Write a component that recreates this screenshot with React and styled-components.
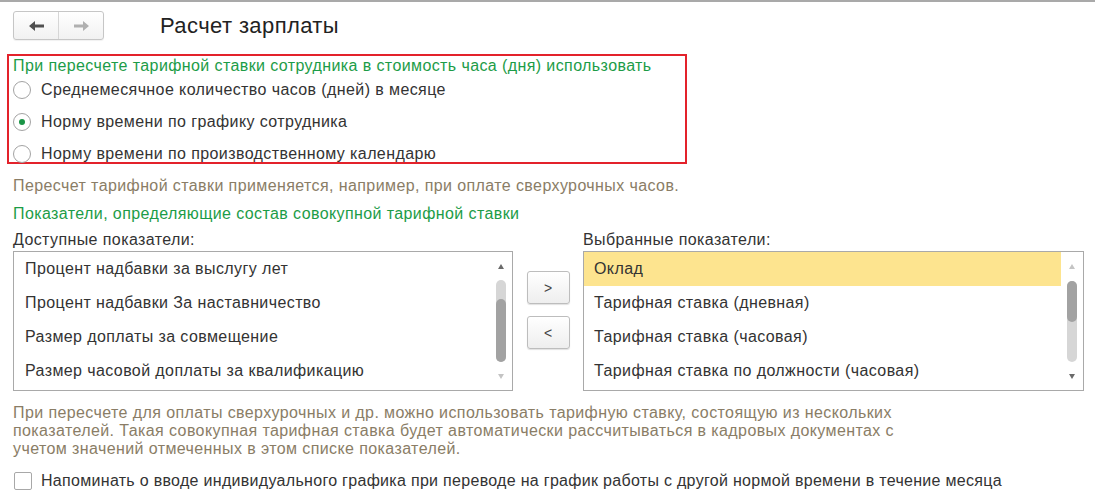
import React from "react";
import styled, { createGlobalStyle } from "styled-components";

const GlobalStyle = createGlobalStyle`
  html, body { margin: 0; padding: 0; background: #fff; }
  body {
    font-family: "Liberation Sans", Arial, sans-serif;
    color: #333;
  }
  * { box-sizing: border-box; }
`;

const Page = styled.div`
  width: 1095px;
  height: 503px;
  border-top: 2px solid #a9a9a9;
  overflow: hidden;
`;

const Header = styled.div`
  display: flex;
  align-items: center;
  padding: 9px 0 0 13px;
`;

const NavGroup = styled.div`
  display: flex;
  width: 91px;
  height: 29px;
  border: 1px solid #c6c6c6;
  border-radius: 3px;
  background: linear-gradient(#ffffff, #f1f1f1);
  box-shadow: 0 1px 1px rgba(0, 0, 0, 0.06);
`;

const NavButton = styled.div`
  flex: 1;
  display: flex;
  align-items: center;
  justify-content: center;
  & + & {
    border-left: 1px solid #d6d6d6;
  }
  svg { display: block; }
`;

const Title = styled.div`
  margin-left: 56px;
  font-size: 22px;
  letter-spacing: 0.4px;
  color: #222;
  line-height: 29px;
`;

const Content = styled.div`
  padding-left: 13px;
`;

const RedBox = styled.div`
  margin: 14px 0 0 -6px;
  width: 680px;
  height: 110px;
  border: 2px solid #e3222b;
  padding: 0 4px;
`;

const Text = styled.div`
  font-size: 16px;
  letter-spacing: ${(p) => p.$ls ?? 0.4}px;
  line-height: ${(p) => p.$lh || 18}px;
  margin-top: ${(p) => p.$mt || 0}px;
  white-space: nowrap;
`;

const GreenHeading = styled(Text)`
  color: #1c9c47;
`;

const Hint = styled(Text)`
  color: #8a7d66;
`;

const Label = styled(Text)`
  color: #333;
`;

const RadioList = styled.div`
  display: flex;
  flex-direction: column;
  gap: 10px;
  padding-top: 3px;
`;

const RadioRow = styled.div`
  display: flex;
  align-items: center;
  height: 22px;
  gap: 10px;
  font-size: 16px;
  letter-spacing: 0.4px;
  color: #333;
  white-space: nowrap;
`;

const RadioCircle = styled.span`
  flex: none;
  width: 18px;
  height: 18px;
  border-radius: 50%;
  border: 1px solid #a3a3a3;
  background: #fff;
  display: flex;
  align-items: center;
  justify-content: center;
  &::after {
    content: "";
    width: 6px;
    height: 6px;
    border-radius: 50%;
    background: ${(p) => (p.$checked ? "#1a9446" : "transparent")};
  }
`;

const ListsGrid = styled.div`
  display: grid;
  grid-template-columns: 500px 70px 501px;
  margin-top: ${(p) => p.$mt || 0}px;
`;

const ListBox = styled.div`
  height: 140px;
  border: 1px solid #a9a9a9;
  display: flex;
  background: #fff;
`;

const Items = styled.div`
  flex: 1;
  display: flex;
  flex-direction: column;
`;

const Item = styled.div`
  height: 34px;
  display: flex;
  align-items: center;
  padding-left: ${(p) => p.$pad}px;
  font-size: 16px;
  letter-spacing: 0.4px;
  white-space: nowrap;
  color: #333;
  background: ${(p) => (p.$selected ? "#fde48f" : "transparent")};
`;

const ScrollBar = styled.div`
  width: 22px;
  display: flex;
  flex-direction: column;
  align-items: center;
`;

const ArrowCell = styled.div`
  height: ${(p) => p.$h}px;
  display: flex;
  align-items: center;
  justify-content: center;
  &::after {
    content: "";
    width: 0;
    height: 0;
    border-left: 3px solid transparent;
    border-right: 3px solid transparent;
    ${(p) =>
      p.$up
        ? `border-bottom: 5px solid ${p.$active ? "#6a6a6a" : "#c4c4c4"};`
        : `border-top: 5px solid ${p.$active ? "#6a6a6a" : "#c4c4c4"};`}
  }
`;

const Track = styled.div`
  flex: 1;
  width: 10px;
  border-radius: 5px;
  background: #d6d6d6;
  display: flex;
  flex-direction: column;
`;

const Thumb = styled.div`
  width: 10px;
  border-radius: 5px;
  background: #a2a2a2;
`;

const MoveButtons = styled.div`
  display: flex;
  flex-direction: column;
  align-items: center;
  gap: 12px;
  padding-top: 20px;
`;

const MoveButton = styled.div`
  width: 43px;
  height: 33px;
  border: 1px solid #bdbdbd;
  border-radius: 3px;
  background: linear-gradient(#ffffff, #eeeeee);
  box-shadow: 0 1px 1px rgba(0, 0, 0, 0.12);
  display: flex;
  align-items: center;
  justify-content: center;
  font-size: 14px;
  color: #444;
`;

const Paragraph = styled(Hint)`
  margin-top: 13px;
`;

const CheckRow = styled.div`
  display: flex;
  align-items: center;
  gap: 9px;
  height: 20px;
  margin-top: 13px;
  font-size: 16px;
  letter-spacing: 0.3px;
  white-space: nowrap;
  color: #333;
`;

const CheckBox = styled.span`
  flex: none;
  width: 18px;
  height: 18px;
  margin-left: 1px;
  border: 1px solid #a8a8a8;
  border-radius: 2px;
  background: #fff;
`;

const Arrow = ({ color, flip }) => (
  <svg width="15" height="10" viewBox="0 0 15 10" style={flip ? { transform: "scaleX(-1)" } : undefined}>
    <path d="M0 5 L6 0 L6 3.5 L15 3.5 L15 6.5 L6 6.5 L6 10 Z" fill={color} />
  </svg>
);

const Scroll = ({ thumbTop, thumbHeight, upActive }) => (
  <ScrollBar>
    <ArrowCell $h={29} $up $active={upActive} />
    <Track>
      <Thumb style={{ marginTop: thumbTop, height: thumbHeight }} />
    </Track>
    <ArrowCell $h={28} $active={!upActive} />
  </ScrollBar>
);

const available = [
  "Процент надбавки за выслугу лет",
  "Процент надбавки За наставничество",
  "Размер доплаты за совмещение",
  "Размер часовой доплаты за квалификацию",
];

const selected = [
  "Оклад",
  "Тарифная ставка (дневная)",
  "Тарифная ставка (часовая)",
  "Тарифная ставка по должности (часовая)",
];

export default function App() {
  return (
    <>
      <GlobalStyle />
      <Page>
        <Header>
          <NavGroup>
            <NavButton>
              <Arrow color="#505050" />
            </NavButton>
            <NavButton>
              <Arrow color="#b0b0b0" flip />
            </NavButton>
          </NavGroup>
          <Title>Расчет зарплаты</Title>
        </Header>
        <Content>
          <RedBox>
            <GreenHeading $lh={20}>
              При пересчете тарифной ставки сотрудника в стоимость часа (дня) использовать
            </GreenHeading>
            <RadioList>
              <RadioRow>
                <RadioCircle />
                Среднемесячное количество часов (дней) в месяце
              </RadioRow>
              <RadioRow>
                <RadioCircle $checked />
                Норму времени по графику сотрудника
              </RadioRow>
              <RadioRow>
                <RadioCircle />
                Норму времени по производственному календарю
              </RadioRow>
            </RadioList>
          </RedBox>
          <Hint $mt={13}>
            Пересчет тарифной ставки применяется, например, при оплате сверхурочных часов.
          </Hint>
          <GreenHeading $mt={10}>
            Показатели, определяющие состав совокупной тарифной ставки
          </GreenHeading>
          <ListsGrid $mt={8}>
            <Label>Доступные показатели:</Label>
            <div />
            <Label>Выбранные показатели:</Label>
          </ListsGrid>
          <ListsGrid $mt={2}>
            <ListBox>
              <Items>
                {available.map((t) => (
                  <Item key={t} $pad={11}>
                    {t}
                  </Item>
                ))}
              </Items>
              <Scroll thumbTop={19} thumbHeight={63} upActive />
            </ListBox>
            <MoveButtons>
              <MoveButton>&gt;</MoveButton>
              <MoveButton>&lt;</MoveButton>
            </MoveButtons>
            <ListBox>
              <Items>
                {selected.map((t, i) => (
                  <Item key={t} $pad={10} $selected={i === 0}>
                    {t}
                  </Item>
                ))}
              </Items>
              <Scroll thumbTop={0} thumbHeight={41} upActive={false} />
            </ListBox>
          </ListsGrid>
          <Paragraph>
            При пересчете для оплаты сверхурочных и др. можно использовать тарифную ставку, состоящую из нескольких
            <br />
            показателей. Такая совокупная тарифная ставка будет автоматически рассчитываться в кадровых документах с
            <br />
            учетом значений отмеченных в этом списке показателей.
          </Paragraph>
          <CheckRow>
            <CheckBox />
            Напоминать о вводе индивидуального графика при переводе на график работы с другой нормой времени в течение месяца
          </CheckRow>
        </Content>
      </Page>
    </>
  );
}
